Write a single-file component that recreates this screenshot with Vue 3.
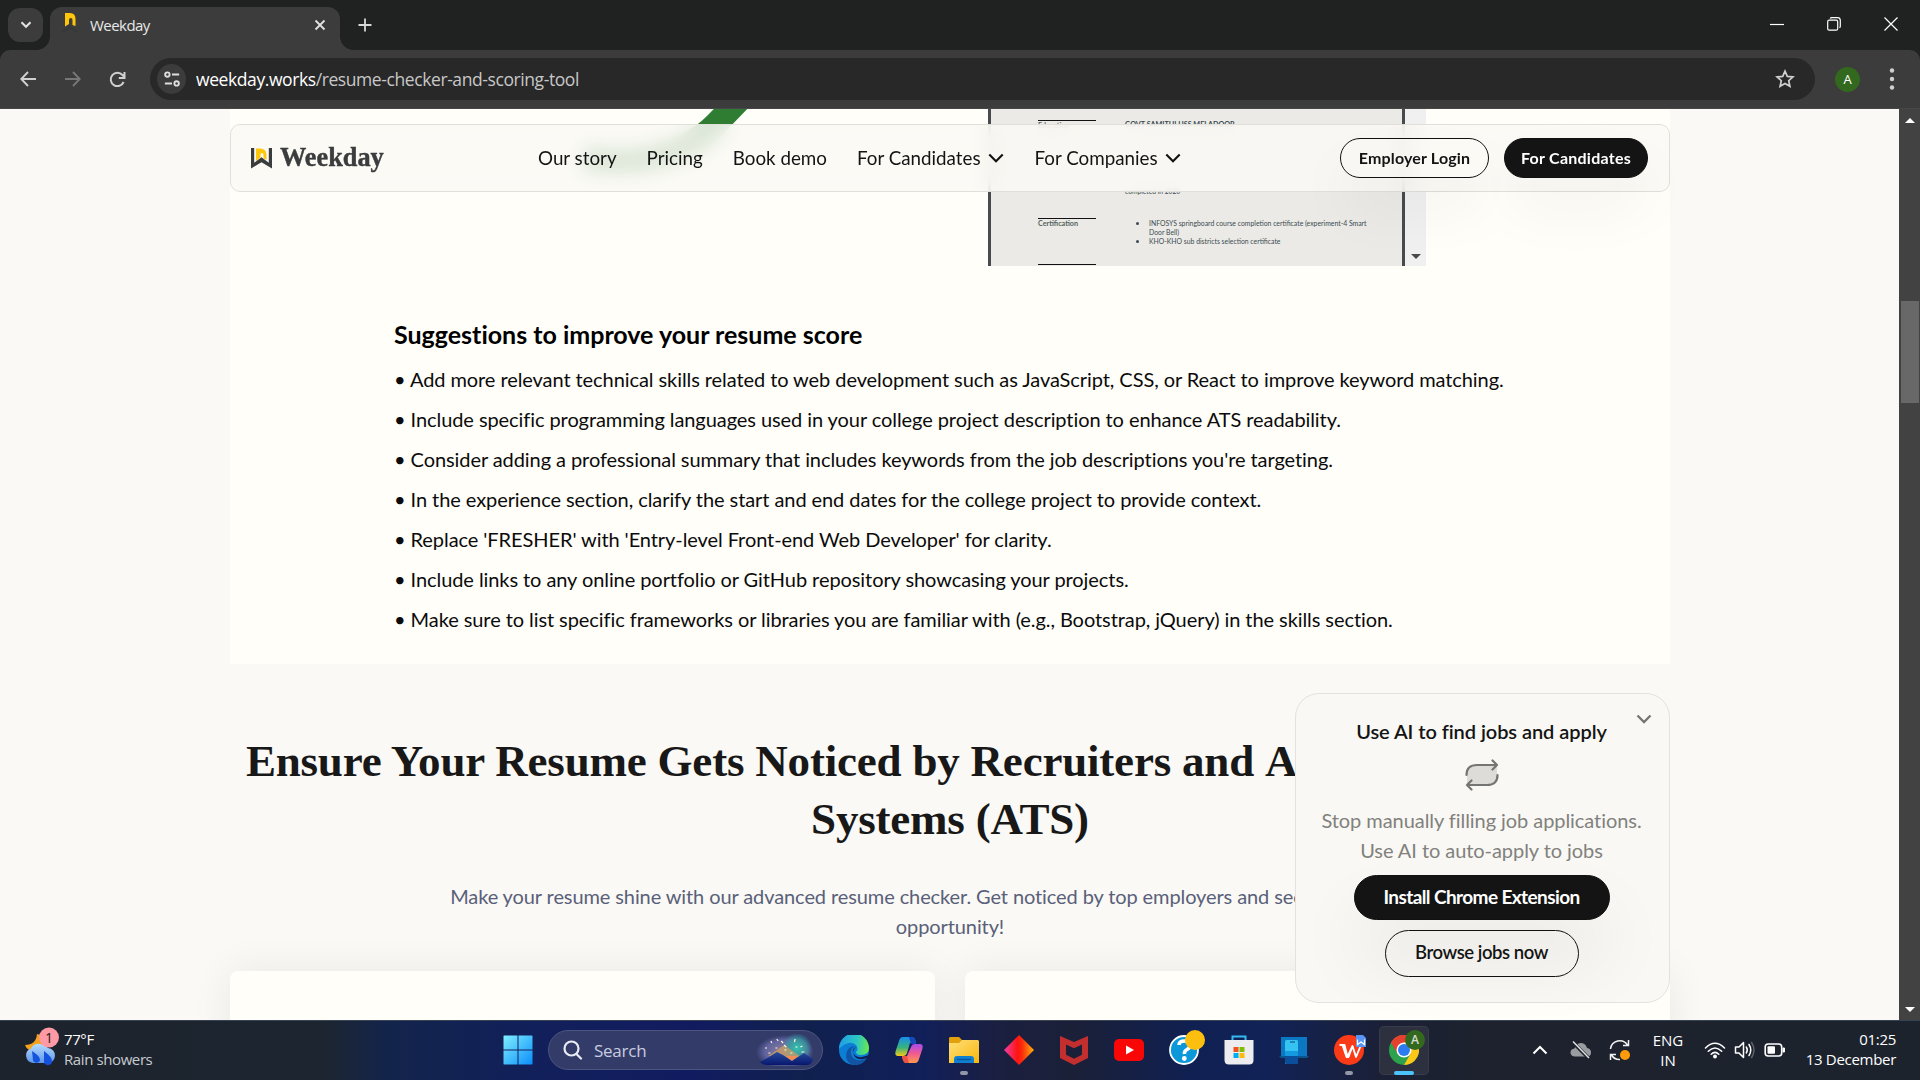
<script setup>
const suggestions = [
  "Add more relevant technical skills related to web development such as JavaScript, CSS, or React to improve keyword matching.",
  "Include specific programming languages used in your college project description to enhance ATS readability.",
  "Consider adding a professional summary that includes keywords from the job descriptions you're targeting.",
  "In the experience section, clarify the start and end dates for the college project to provide context.",
  "Replace 'FRESHER' with 'Entry-level Front-end Web Developer' for clarity.",
  "Include links to any online portfolio or GitHub repository showcasing your projects.",
  "Make sure to list specific frameworks or libraries you are familiar with (e.g., Bootstrap, jQuery) in the skills section.",
]
</script>

<template>
  <div class="screen">
    <header class="tabstrip">
      <div class="tab-search">
        <svg width="12" height="8" viewBox="0 0 12 8"><path d="M1.5 1.2 6 5.8l4.500-4.600" fill="none" stroke="#e3e3e3" stroke-width="2" /></svg>
      </div>
      <div class="tab">
        <svg class="favicon" width="20" height="24" viewBox="0 0 20 24">
          <path d="M5 1h5q5.500 0 5.500 6v7l-3-1V8q0-2-1.700-2T9 8v4l-4 2.500z" fill="#ffc60b" />
          <path d="M2 20l8-5 7 5" fill="none" stroke="#35383b" stroke-width="2" />
        </svg>
        <span class="tab-title">Weekday</span>
        <svg class="tab-close" width="12" height="12" viewBox="0 0 12 12"><path d="M1.500 1.500l9 9m0-9l-9 9" stroke="#e3e3e3" stroke-width="1.800" /></svg>
      </div>
      <svg class="new-tab" width="14" height="14" viewBox="0 0 14 14"><path d="M7 .5v13M.5 7h13" stroke="#d8d8d8" stroke-width="1.800" /></svg>
      <div class="win-controls">
        <svg width="14" height="14" viewBox="0 0 14 14"><path d="M0 7.500h14" stroke="#fff" stroke-width="1.200" /></svg>
        <svg width="14" height="14" viewBox="0 0 14 14" fill="none" stroke="#fff" stroke-width="1.200"><rect x=".7" y="3.200" width="10" height="10" rx="1.500" /><path d="M3.200 1.500Q3.500.7 5 .7h5.500q2.800 0 2.800 2.800V9q0 1.300-.8 1.800" /></svg>
        <svg width="14" height="14" viewBox="0 0 14 14"><path d="M.5.5l13 13m0-13l-13 13" stroke="#fff" stroke-width="1.200" /></svg>
      </div>
    </header>

    <div class="toolbar">
      <svg width="16" height="16" viewBox="0 0 16 16" fill="none" stroke="#d0d0d0" stroke-width="1.900"><path d="M16 8H1.500M8 1 1.300 8 8 15" /></svg>
      <svg width="16" height="16" viewBox="0 0 16 16" fill="none" stroke="#777" stroke-width="1.900"><path d="M0 8h14.500M8 1l6.700 7L8 15" /></svg>
      <svg width="17" height="17" viewBox="0 0 17 17" fill="none" stroke="#d0d0d0" stroke-width="2"><path d="M14.600 11A6.700 6.700 0 1 1 13.500 4L15 6M15.500 1v6H9.800" /></svg>
      <div class="omnibox">
        <div class="site-info">
          <svg width="16" height="16" viewBox="0 0 18 18" fill="none" stroke="#dedede" stroke-width="2.100"><circle cx="3.800" cy="4" r="2.500" /><path d="M9 4h8M1 14h8" /><circle cx="14.200" cy="14" r="2.500" /></svg>
        </div>
        <span class="url"><b>weekday.works</b>/resume-checker-and-scoring-tool</span>
        <svg class="star" width="20" height="20" viewBox="0 0 20 20" fill="none" stroke="#d0d0d0" stroke-width="1.700"><path d="M10 2.200l2.300 5.200 5.600.5-4.200 3.800 1.200 5.600L10 14.400l-4.900 2.900 1.200-5.600L2.100 7.900l5.600-.5z" /></svg>
      </div>
      <div class="avatar">A</div>
      <svg class="menu-dots" width="6" height="24" viewBox="0 0 6 24" fill="#d0d0d0"><circle cx="3" cy="3.500" r="2.200" /><circle cx="3" cy="12" r="2.200" /><circle cx="3" cy="20.500" r="2.200" /></svg>
    </div>

    <div class="viewport">
      <main class="page">
        <section class="report">
          <div class="preview-row">
            <svg class="gauge" width="520" height="157" viewBox="230 109 520 157"><path d="M583 158C630 166 680 160 716 124l30-31" fill="none" stroke="#2e7d32" stroke-width="24" /></svg>
            <div class="resume">
              <div class="sheet">
                <div class="sheet-row edu"><h5>Education</h5><p><b>GOVT SAMITHI HSS MELADOOR</b></p></div>
                <div class="sheet-row done"><span></span><p>completed in 2020</p></div>
                <div class="sheet-row cert">
                  <h5>Certification</h5>
                  <ul>
                    <li>INFOSYS springboard course completion certificate (experiment-4 Smart<br />Door Bell)</li>
                    <li>KHO-KHO sub districts selection certificate</li>
                  </ul>
                </div>
                <div class="sheet-row tail"><h5></h5></div>
              </div>
              <div class="sheet-scroll"><i></i></div>
            </div>
          </div>
          <h3>Suggestions to improve your resume score</h3>
          <p v-for="s in suggestions" :key="s" class="suggestion">• {{ s }}</p>
        </section>

        <section class="ensure">
          <h2>Ensure Your Resume Gets Noticed by Recruiters and <span>Applicant Tracking</span><br />Systems (ATS)</h2>
          <p>Make your resume shine with our advanced resume checker. Get noticed by top employers and secure your next job<br />opportunity!</p>
          <div class="cards"><div></div><div></div></div>
        </section>
      </main>

      <nav class="nav">
        <svg class="logo" width="21" height="21" viewBox="0 0 21 21">
          <path d="M5 .5h4q6.500 0 6.500 6.500v5l-3-2V7q0-2-1.500-2T9.500 7v2.500L5 13z" fill="#ffc60b" />
          <path d="M0 0h3.200v14.800l7.300-5.600 7.300 5.600V0H21v20.500l-10.500-6.300L0 20.500z" fill="#3a3c3e" />
        </svg>
        <span class="brand">Weekday</span>
        <div class="links">
          <a>Our story</a><a>Pricing</a><a>Book demo</a>
          <a>For Candidates<svg width="16" height="10" viewBox="0 0 16 10"><path d="M1.300 1.500 8 8.300l6.700-6.800" fill="none" stroke="#111" stroke-width="2.100" /></svg></a>
          <a>For Companies<svg width="16" height="10" viewBox="0 0 16 10"><path d="M1.300 1.500 8 8.300l6.700-6.800" fill="none" stroke="#111" stroke-width="2.100" /></svg></a>
        </div>
        <div class="actions"><button class="employer">Employer Login</button><button class="dark cand">For Candidates</button></div>
      </nav>

      <aside class="promo">
        <svg class="collapse" width="16" height="10" viewBox="0 0 16 10"><path d="M1.500 1.500 8 8l6.500-6.500" fill="none" stroke="#757573" stroke-width="2.300" /></svg>
        <h4>Use AI to find jobs and apply</h4>
        <svg class="repeat" width="34" height="32" viewBox="0 0 34 32" fill="none" stroke="#757573" stroke-width="2.200" stroke-linecap="round" stroke-linejoin="round">
          <path d="M2 16Q2 6 12 6h20v9q0 11-10 11H2z" fill="#dddcd8" stroke="none" />
          <path d="M1.500 16Q1.500 6 12 6h20M27.500 1.500 32 6l-4.500 4.500M32.500 16q0 10-10.500 10H2M6.500 21.500 2 26l4.500 4.500" />
        </svg>
        <p>Stop manually filling job applications.<br />Use AI to auto-apply to jobs</p>
        <button class="dark install">Install Chrome Extension</button>
        <button class="browse">Browse jobs now</button>
      </aside>

      <div class="scrollbar"><i class="up"></i><div class="thumb"></div><i class="down"></i></div>
    </div>

    <footer class="taskbar">
      <div class="weather">
        <svg width="36" height="40" viewBox="0 0 36 40">
          <defs><linearGradient id="cl" x1="0" y1="0" x2="0" y2="1"><stop offset="0" stop-color="#b5dcff" /><stop offset="1" stop-color="#5d97ec" /></linearGradient></defs>
          <path d="M12 7q-1 11-12 11 2 6 10 6l9-5V9z" fill="#f5a31c" />
          <path d="M8 36a7.500 7.500 0 0 1-2-14.500Q9 16 15 17t8 4a7.500 7.500 0 0 1-1 15z" fill="url(#cl)" />
          <path d="M7 24q8 5 8 9a3.600 3.600 0 0 1-7 0zM19 24q8 6 8 10a4 4 0 0 1-8 0z" fill="#1553dc" />
          <circle cx="24" cy="10.500" r="10" fill="#ff99a4" />
          <text x="24" y="15.500" text-anchor="middle" font-size="14" font-family="Open Sans, sans-serif" fill="#1b1b1b">1</text>
        </svg>
        <div><span class="temp">77°F</span><span class="rain">Rain showers</span></div>
      </div>

      <div class="start">
        <svg width="30" height="30" viewBox="0 0 30 30">
          <defs><linearGradient id="wn" x1="0" y1="0" x2="1" y2="1"><stop offset="0" stop-color="#80f0ff" /><stop offset="1" stop-color="#0a8dfa" /></linearGradient></defs>
          <path d="M1 .5h13.500V14.500H.5V1zM15.500.5H29l.5.5v13.500h-14zM.5 15.500h14v14H1L.5 29zM15.500 15.500h14V29l-.5.5H15.500z" fill="url(#wn)" />
        </svg>
      </div>
      <div class="search">
        <svg width="20" height="20" viewBox="0 0 20 20" fill="none" stroke="#e8ebf3" stroke-width="2.200" stroke-linecap="round"><circle cx="8.500" cy="8.500" r="7" /><path d="M13.500 14l4.500 4.500" /></svg>
        <span>Search</span>
        <svg class="highlight" width="58" height="32" viewBox="0 0 58 32">
          <defs>
            <radialGradient id="sky"><stop offset="0" stop-color="#8d8196" /><stop offset=".7" stop-color="#60639f" /><stop offset="1" stop-color="#5b5fa0" stop-opacity="0" /></radialGradient>
            <radialGradient id="teal"><stop offset="0" stop-color="#2fc4ae" /><stop offset=".6" stop-color="#3b9ba0" stop-opacity=".8" /><stop offset="1" stop-color="#3c9db4" stop-opacity="0" /></radialGradient>
            <linearGradient id="mt" x1="0" y1="0" x2="0" y2="1"><stop offset="0" stop-color="#284c9d" /><stop offset="1" stop-color="#08176e" /></linearGradient>
          </defs>
          <ellipse cx="29" cy="18" rx="29" ry="17" fill="url(#sky)" /><circle cx="41" cy="14" r="15" fill="url(#teal)" />
          <path d="M12 22l16-11 16 11-9 5z" fill="#d9a25e" opacity=".65" /><path d="M30 22h12l-6 5z" fill="#f58a55" />
          <path d="M4 28l9-5 8-5 6 3 9 6 6-4 6-4 9 6q-1 6-7 6H12q-6 0-8-3z" fill="url(#mt)" />
          <path d="M9 14h2m4-7 .7 2m5-4 1.500 2m3 0 2 2m1 2 2 2m9-8-.8 3m8 4-2 1m3 5h-2m-31 1h-2m7-5h2m18-1h2m5 5h2m-14 1h2m-8-3h2" stroke="#fff6df" stroke-width="1.200" />
        </svg>
      </div>

      <div class="apps">
        <div class="app">
          <svg width="30" height="30" viewBox="0 0 30 30">
            <defs><linearGradient id="e1" x1="0" y1=".4" x2="1" y2=".5"><stop offset="0" stop-color="#1e9de9" /><stop offset=".6" stop-color="#2dc6c1" /><stop offset="1" stop-color="#67ea4b" /></linearGradient></defs>
            <circle cx="15" cy="15" r="15" fill="#0b7ed5" />
            <path d="M0 14A15 15 0 0 1 30 13q0 7-8 7-5 0-5-3 3-3 0-7Q10 4 0 14z" fill="url(#e1)" />
            <path d="M17 11q-6 1-5 8 2 7 10 6 3 0 6-2Q23 31 15 30 7 28 7 20q1-9 10-9z" fill="#1254a4" />
            <path d="M17 12q-4 2-3 5 2 6 9 5l7-2q-1 2-2 3-8 3-12-1-4-6 1-10z" fill="#131f55" />
          </svg>
        </div>
        <div class="app">
          <svg width="28" height="26" viewBox="0 0 28 26">
            <defs>
              <linearGradient id="c1" x1="0" y1="0" x2="0" y2="1"><stop offset="0" stop-color="#168fee" /><stop offset=".55" stop-color="#37b27c" /><stop offset="1" stop-color="#f4cc17" /></linearGradient>
              <linearGradient id="c2" x1="0" y1="0" x2="0" y2="1"><stop offset="0" stop-color="#a64bee" /><stop offset=".5" stop-color="#f15a92" /><stop offset="1" stop-color="#ff9a4c" /></linearGradient>
            </defs>
            <path d="M8 0h9q3 0 4 6l-6 0-3 10q-1 3-4 3H3q-4 0-2-6L4 4q1-4 4-4z" fill="url(#c1)" />
            <path d="M14 0h3q3 0 4 7h-5z" fill="#1746bd" />
            <path d="M20 26h-9q-3 0-4-7h5l4-9q1-3 4-3h5q4 0 2 6l-3 9q-1 4-4 4z" fill="url(#c2)" />
            <path d="M7 19h5l2 7h-3q-3 0-4-7z" fill="#ee5142" />
          </svg>
        </div>
        <div class="app">
          <svg width="30" height="26" viewBox="0 0 30 26">
            <defs><linearGradient id="fo" x1="0" y1="0" x2="1" y2="1"><stop offset="0" stop-color="#ffe07a" /><stop offset="1" stop-color="#f9b60c" /></linearGradient></defs>
            <path d="M0 1l1-1h9l3 3v5H0z" fill="#e2a00c" /><path d="M0 6h10l3-3h16l1 1v22H0z" fill="url(#fo)" />
            <path d="M5 26v-4q0-3 3-3h14q3 0 3 3v4z" fill="#117fd0" /><path d="M8 22.500h14" stroke="#07549c" stroke-width="1.300" />
          </svg>
          <i class="dot"></i>
        </div>
        <div class="app">
          <svg width="30" height="30" viewBox="0 0 30 30"><defs><linearGradient id="di"><stop offset="0" stop-color="#ef3fa8" /><stop offset=".45" stop-color="#ff1411" /><stop offset=".6" stop-color="#fb2a0c" /><stop offset="1" stop-color="#ffb40c" /></linearGradient></defs><path d="M15 0l15 15-15 15L0 15z" fill="url(#di)" /></svg>
        </div>
        <div class="app">
          <svg width="28" height="30" viewBox="0 0 28 30"><path d="M0 1l14 6 14-6v22l-14 7-14-7zM6 9.500v10.300l8 3.900 8-3.900V9.500l-8 3.700z" fill="#c32f2f" fill-rule="evenodd" /></svg>
        </div>
        <div class="app">
          <svg width="30" height="22" viewBox="0 0 30 22"><rect width="30" height="22" rx="5" fill="#f90606" /><path d="M12 6.500l8 4.500-8 4.500z" fill="#fff" /></svg>
        </div>
        <div class="app">
          <svg width="30" height="30" viewBox="0 0 30 30"><circle cx="15" cy="15" r="14" fill="#0b98d8" stroke="#fff" stroke-width="1.800" /><path d="M10 10q0-4 5.500-4T21 10.500q0 2.500-3 4T15.500 19" fill="none" stroke="#fff" stroke-width="3.600" /><circle cx="15.300" cy="23.500" r="2.400" fill="#fff" /></svg>
          <span class="badge yellow"></span>
        </div>
        <div class="app">
          <svg width="30" height="30" viewBox="0 0 30 30">
            <path d="M8.500 6V1.500h13V6" fill="none" stroke="#35b9ee" stroke-width="2" />
            <path d="M.5 5h29v20q0 4.500-4.500 4.500H5Q.5 29.500.5 25z" fill="#ededf0" />
            <path d="M9.500 12h5v5h-5z" fill="#f1511b" /><path d="M15.500 12h5v5h-5z" fill="#80bc06" /><path d="M9.500 18h5v5h-5z" fill="#00adef" /><path d="M15.500 18h5v5h-5z" fill="#fbbc09" />
          </svg>
        </div>
        <div class="app">
          <svg width="30" height="28" viewBox="0 0 30 28"><path d="M2 1h26v20H2z" fill="#0b78c4" /><path d="M0 20h30l-2 2H2z" fill="#0c5690" /><rect x="6" y="4" width="13" height="24" rx="1.500" fill="#35c3f2" /><path d="M6 15h13v6H6z" fill="#1599e0" /><path d="M6 20h13v8H7.500Q6 28 6 26z" fill="#0b4e9c" /><path d="M11 6h5" stroke="#0a4770" /></svg>
        </div>
        <div class="app">
          <svg width="30" height="30" viewBox="0 0 30 30"><circle cx="15" cy="15" r="15" fill="#fb3a17" /><path d="M5.500 10h5l3 12 5-11 3.500 11L27 10M8.500 10l4 12h2l4-11" fill="none" stroke="#fff" stroke-width="1.900" stroke-linejoin="round" /></svg>
          <span class="badge wps"><svg width="10" height="12" viewBox="0 0 10 12"><path d="M0 0h7l3 3v9H0z" fill="#5b93f2" /><path d="M1.500 4.500v5L5 7l3.500 2.500v-5" fill="none" stroke="#fff" stroke-width="1.200" /></svg></span>
          <i class="dot"></i>
        </div>
        <div class="app active">
          <svg width="30" height="30" viewBox="0 0 30 30">
            <circle cx="15" cy="15" r="15" fill="#2ca24c" /><path d="M15 15L2 7.500A15 15 0 0 1 28 7.500H15z" fill="#e6402f" /><path d="M2 7.500A15 15 0 0 1 15 0v15L8.500 18.700z" fill="#e6402f" />
            <path d="M15 7.500h13A15 15 0 0 1 15 30l6.500-11.200z" fill="#fdc718" />
            <circle cx="15" cy="15" r="7.500" fill="#fff" /><circle cx="15" cy="15" r="6" fill="#2c7bf0" />
          </svg>
          <span class="badge user">A</span>
          <i class="dot on"></i>
        </div>
      </div>

      <div class="tray">
        <svg width="16" height="10" viewBox="0 0 16 10"><path d="M1.500 8.500 8 2l6.500 6.500" fill="none" stroke="#fff" stroke-width="2" /></svg>
        <svg class="cloud" width="22" height="18" viewBox="0 0 22 18"><path d="M4.500 15.500q-4-.5-4-4t4-4q2-5 6-5.500 5 0 6.500 5 4 .5 4 4.500t-4 4z" fill="#9a9da0" /><path d="M2.500 1l16 16" stroke="#1d232d" stroke-width="3.500" /><path d="M3 .5l16 16.500" stroke="#e6e6e6" stroke-width="1.400" /></svg>
        <svg class="sync" width="22" height="22" viewBox="0 0 22 22"><g fill="none" stroke="#f2f2f2" stroke-width="1.500"><path d="M1.500 10A9.300 9.300 0 0 1 18.500 6M19.500 1v5.500H14M11 20.500A9.300 9.300 0 0 1 2.500 16M1.500 21v-5.500H7" /></g><circle cx="16" cy="16" r="5" fill="#ff9b0b" /></svg>
        <div class="lang"><span>ENG</span><span>IN</span></div>
        <svg class="wifi" width="22" height="17" viewBox="0 0 22 17" fill="none" stroke="#fff" stroke-width="1.500" stroke-linecap="round"><path d="M1.500 6q9.500-9.500 19 0M4.300 9.200q6.700-6.500 13.400 0M7.200 12.200q3.800-3.600 7.600 0" /><circle cx="11" cy="14.500" r="1.200" fill="#fff" /></svg>
        <svg class="vol" width="22" height="18" viewBox="0 0 22 18" fill="none" stroke="#fff" stroke-width="1.500" stroke-linecap="round" stroke-linejoin="round"><path d="M1.500 6h3.500l4.500-4.500v15L5 12H1.500zM12.300 6q2 3 0 6M15 3.500q3.500 5.500 0 11" /><path d="M17.600 1.500q4.800 7.500 0 15" stroke="#5d6268" /></svg>
        <svg class="bat" width="22" height="16" viewBox="0 0 22 16"><rect x="1.200" y="2" width="16.500" height="12" rx="3" fill="none" stroke="#fff" stroke-width="1.600" /><rect x="3.500" y="4.300" width="7.500" height="7.500" rx="1" fill="#fff" /><path d="M19 6h1.500v4H19z" fill="#fff" stroke="#fff" /></svg>
        <div class="clock"><span class="time">01:25</span><span>13 December</span></div>
      </div>
    </footer>
  </div>
</template>

<style>
html, body { margin: 0; overflow: hidden; background: #faf9f5; }
</style>

<style scoped>
* { box-sizing: border-box; }
.screen { width: 1920px; height: 1080px; display: flex; flex-direction: column; overflow: hidden; background: #1f2221; font-family: "Open Sans", "Noto Sans", sans-serif; }
svg { display: block; flex: none; }
h2, h3, h4, h5, p, ul { margin: 0; padding: 0; font-weight: 400; }
button { font-family: Lato, sans-serif; background: none; border: 1.500px solid #111; border-radius: 30px; color: #141414; padding: 0; white-space: nowrap; }
.dark { background: #141414; color: #fff; }

.tabstrip { height: 50px; flex: none; display: flex; padding-left: 8px; }
.tab-search { width: 35px; height: 34px; margin-top: 8px; border-radius: 12px; background: #3c3c3c; display: flex; align-items: center; justify-content: center; }
.tab { position: relative; width: 290px; height: 43px; margin: 7px 0 0 7px; border-radius: 12px 12px 0 0; background: #3c3c3c; display: flex; align-items: center; padding: 0 14px 9px 10px; }
.tab::before, .tab::after { content: ""; position: absolute; bottom: 0; width: 13px; height: 13px; }
.tab::before { left: -13px; background: radial-gradient(circle at 0 0, transparent 12.500px, #3c3c3c 13px); }
.tab::after { right: -13px; background: radial-gradient(circle at 100% 0, transparent 12.500px, #3c3c3c 13px); }
.tab-title { margin: 1px auto 0 10px; font-size: 15px; color: #e8e8e8; letter-spacing: -.55px; }
.tab-close { margin-top: 2px; }
.new-tab { margin: 18px 0 0 18px; }
.win-controls { margin: 17px 22px 0 auto; display: flex; gap: 43px; }

.toolbar { height: 59px; flex: none; background: #3c3c3c; box-shadow: inset 0 -1px #474747; display: flex; align-items: center; padding: 0 25px 1px 20px; border-radius: 10px 10px 0 0; }
.toolbar > svg:nth-child(2) { margin-left: 29px; }
.toolbar > svg:nth-child(3) { margin-left: 28px; }
.omnibox { width: 1665px; height: 42px; margin-left: 24px; border-radius: 21px; background: #282828; display: flex; align-items: center; padding: 0 20px 0 7px; }
.site-info { width: 29px; height: 30px; border-radius: 50%; background: #3c3c3c; display: flex; align-items: center; justify-content: center; }
.url { margin-left: 10px; font-size: 17.500px; letter-spacing: -.41px; color: #c7c7c7; white-space: nowrap; }
.url b { font-weight: 400; color: #fff; }
.star { margin-left: auto; width: 20px; }
.avatar { margin-left: 20px; width: 25px; height: 25px; border-radius: 50%; background: #33691e; color: #fff; font-size: 13px; line-height: 25px; text-align: center; }
.menu-dots.menu-dots { margin-left: auto; }

.viewport { position: relative; height: 911px; flex: none; background: #faf9f5; display: flex; overflow: hidden; }
.page { width: 1899px; flex: none; padding: 0 229px 0 230px; font-family: Lato, sans-serif; }
.report { height: 555px; background: #fffef9; padding-left: 164px; }
.preview-row { height: 157px; margin-left: -164px; display: flex; }
.gauge { margin-right: 238px; }
.resume { width: 438px; display: flex; overflow: hidden; }
.sheet { width: 417px; border: solid #484b4e; border-width: 0 3px; background: #ebeae7; font-size: 6.700px; line-height: 8.500px; color: #3c4a50; overflow: hidden; padding-left: 47px; }
.sheet-row { display: flex; }
.sheet-row h5 { width: 58px; flex: none; margin-right: 29px; border-top: 1.500px solid #111; padding-top: 2px; font-size: 7px; font-weight: 700; color: #55635c; }
.sheet-row > span { width: 87px; }
.edu { padding-top: 11px; height: 74px; }
.edu h5 { padding-top: 0; }
.edu p { padding-top: 1px; font-size: 7.200px; }
.done { padding-top: 4px; height: 35px; }
.cert { height: 46px; }
.sheet-row ul { padding: 1px 0 0 24px; font-size: 6.850px; white-space: nowrap; }
.cert h5 { font-size: 7.200px; padding-top: 1px; }
.cert li { padding-bottom: 1px; }
.cert li::marker { font-size: 10px; line-height: 1px; }
.sheet-scroll { flex: 1; background: #f0f0f1; display: flex; align-items: flex-end; justify-content: center; padding-bottom: 7px; }
.sheet-scroll i { border: 5px solid transparent; border-top: 5px solid #4a4a4a; border-bottom: 0; }
.report h3 { margin-top: 52px; font-size: 25px; line-height: 32px; font-weight: 700; letter-spacing: 0; font-variant-ligatures: none; color: #000; }
.suggestion { height: 40px; line-height: 40px; font-size: 20px; letter-spacing: -.075px; color: #0b0b0b; white-space: nowrap; }
.report h3 + .suggestion { margin-top: 9px; }

.ensure { text-align: center; padding-top: 68px; }
.ensure h2 { font-family: "Liberation Serif", serif; font-weight: 700; font-size: 45px; letter-spacing: -.2px; line-height: 58px; color: #181818; white-space: nowrap; }
.ensure h2 span { letter-spacing: .8px; }
.ensure > p { margin-top: 33px; font-size: 20px; letter-spacing: -.1px; line-height: 30px; color: #596079; white-space: nowrap; }
.cards { display: flex; gap: 30px; margin-top: 30px; }
.cards div { flex: 1; height: 200px; background: #fffef9; border-radius: 8px; box-shadow: 0 0 40px rgba(0, 0, 0, .07); }

.nav { position: absolute; left: 230px; top: 15px; width: 1440px; height: 68px; border: 1px solid #e0dfda; border-radius: 10px; background: rgba(250, 249, 245, .85); backdrop-filter: blur(9px); display: flex; align-items: center; padding: 0 21px 0 20px; font-family: Lato, sans-serif; color: #141414; }
.brand { width: 258px; margin-left: 8px; font: 700 26.300px "Liberation Serif", serif; color: #3a3c3e; -webkit-text-stroke: .4px #3a3c3e; }
.links { display: flex; gap: 30px; font-size: 18.800px; white-space: nowrap; margin-top: -2px; }
.links a { display: flex; align-items: center; gap: 7px; }
.links svg { margin: 1px 1px 0 0; }
.actions { margin-left: auto; display: flex; gap: 15px; }
.actions button { height: 40px; padding-bottom: 1px; font-size: 16px; font-weight: 700; box-shadow: 0 30px 60px rgba(0, 0, 0, .05); }
.employer { width: 149px; letter-spacing: .15px; }
.cand { width: 144px; letter-spacing: .25px; }

.promo { position: absolute; left: 1295px; top: 584px; width: 375px; height: 310px; border: 1px solid #e2e2e1; border-radius: 24px; background: #f9f8f4; display: flex; flex-direction: column; align-items: center; padding-right: 2px; font-family: Lato, sans-serif; }
.collapse { position: absolute; right: 17px; top: 20px; }
.promo h4 { margin-top: 23px; font-size: 20px; line-height: 28px; font-weight: 600; letter-spacing: -.06px; color: #141414; white-space: nowrap; }
.repeat { margin-top: 14px; }
.promo p { margin-top: 14px; font-size: 20px; letter-spacing: -.06px; line-height: 30px; color: #81817d; text-align: center; white-space: nowrap; }
.install { width: 256px; height: 45px; margin-top: 10px; padding-bottom: 3px; font-size: 19px; font-weight: 700; letter-spacing: -.6px; box-shadow: 0 40px 70px rgba(0, 0, 0, .08); }
.browse { width: 194px; height: 47px; margin-top: 10px; padding-bottom: 3px; font-size: 18.500px; font-weight: 600; letter-spacing: -.45px; }

.scrollbar { width: 21px; flex: none; background: #424242; display: flex; flex-direction: column; align-items: center; }
.scrollbar i { border: 5px solid transparent; }
.up { border-top: 0 !important; border-bottom: 5px solid #fff !important; margin-top: 9px; }
.thumb { width: 18px; height: 102px; margin-top: 178px; background: #686868; }
.down { border-bottom: 0 !important; border-top: 5px solid #fff !important; margin-top: auto; margin-bottom: 8px; }

.taskbar { height: 60px; flex: none; display: flex; align-items: center; padding-bottom: 1px; border-top: 1px solid #384353; background: linear-gradient(90deg, #1d232d 0, #1c2530 17%, #13244a 20%, #12205a 27%, #111c60 36%, #10204e 42%, #111f5a 48%, #1b1f40 52%, #1b2038 56%, #102052 62%, #112257 66%, #1b2036 72%, #1d222e 77%, #1d232d 100%); color: #fff; }
.weather { width: 478px; padding-left: 25px; display: flex; align-items: flex-start; margin-top: -5px; gap: 3px; font-size: 15px; line-height: 20px; }
.weather div { display: flex; flex-direction: column; margin-top: 2px; letter-spacing: -.4px; }
.rain { color: #c8cbcf; }
.start { width: 70px; padding-left: 25px; flex: none; }
.search { width: 275px; height: 40px; flex: none; border: 1px solid #4b557f; border-radius: 20px; background: #333c68; display: flex; align-items: center; padding: 0 8px 0 14px; color: #c9cce0; font-size: 17px; letter-spacing: -.25px; }
.search span { margin-left: 11px; }
.highlight { margin-left: auto; }
.apps { display: flex; gap: 5px; margin-left: 6px; }
.app { position: relative; width: 50px; height: 49px; display: flex; align-items: center; justify-content: center; border-radius: 5px; }
.active { background: #2d303f; box-shadow: inset 0 0 0 1px #383b49; }
.dot { position: absolute; left: 21px; bottom: 0; width: 8px; height: 4px; border-radius: 2px; background: #9296a6; }
.on { left: 15px; width: 20px; background: #4cc2ff; }
.badge { position: absolute; left: 26px; top: 4px; width: 20px; height: 20px; border-radius: 50%; }
.yellow { background: #fdbf0f; }
.user { background: #33691e; color: #d4dccf; font-size: 12px; line-height: 20px; text-align: center; font-weight: 600; }
.wps { left: 32px; top: 9px; }
.tray { margin-left: auto; padding-right: 24px; display: flex; align-items: center; font-size: 15px; line-height: 20px; }
.cloud { margin-left: 22px; }
.sync { margin-left: 17px; }
.lang { width: 42px; margin: -1px 0 0 16px; display: flex; flex-direction: column; align-items: center; }
.wifi { margin-left: 15px; }
.vol { margin-left: 8px; }
.bat { margin-left: 8px; }
.clock { width: 110px; margin-top: -3px; display: flex; flex-direction: column; align-items: flex-end; letter-spacing: -.3px; white-space: nowrap; }
</style>
